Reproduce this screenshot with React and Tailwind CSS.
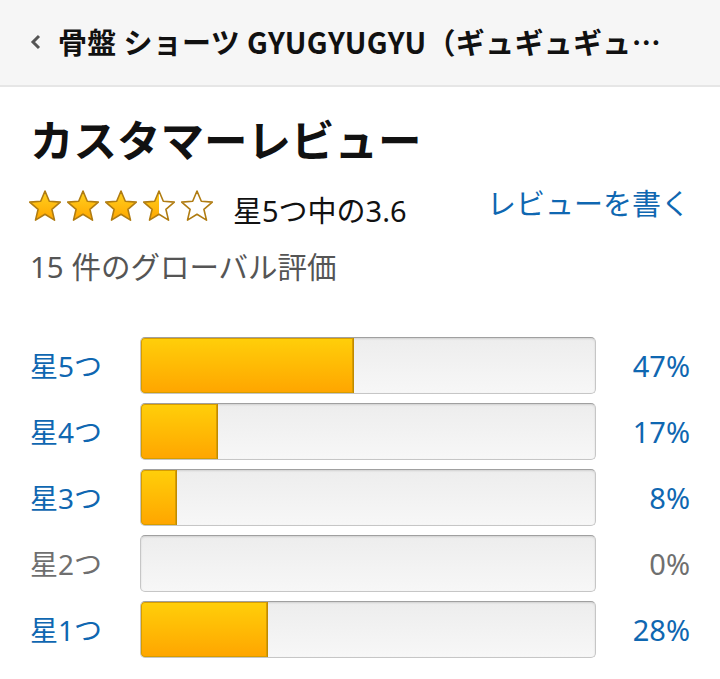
import React from 'react';

const blue = 'text-[#0f67b1]';

const Star = ({ fill = 1, id }) => (
    <svg width="36" height="34" viewBox="0 0 36 34">
        <defs>
            <linearGradient id={`g${id}`} x1="0" y1="0" x2="0" y2="1">
                <stop offset="0" stopColor="#ffd21f" />
                <stop offset="1" stopColor="#ffa600" />
            </linearGradient>
            <clipPath id={`c${id}`}>
                <rect x="0" y="0" width={36 * fill} height="34" />
            </clipPath>
        </defs>
        <path
            d="M18 2 L22.3 12.2 L33.3 13.1 L24.9 20.3 L27.5 31.1 L18 25.3 L8.5 31.1 L11.1 20.3 L2.7 13.1 L13.7 12.2 Z"
            fill="#fff"
        />
        <path
            d="M18 2 L22.3 12.2 L33.3 13.1 L24.9 20.3 L27.5 31.1 L18 25.3 L8.5 31.1 L11.1 20.3 L2.7 13.1 L13.7 12.2 Z"
            fill={`url(#g${id})`}
            clipPath={`url(#c${id})`}
        />
        <path
            d="M18 2 L22.3 12.2 L33.3 13.1 L24.9 20.3 L27.5 31.1 L18 25.3 L8.5 31.1 L11.1 20.3 L2.7 13.1 L13.7 12.2 Z"
            fill="none"
            stroke="#b07c12"
            strokeWidth="1.6"
            strokeLinejoin="round"
        />
    </svg>
);

const rows = [
    { label: '星5つ', pct: 47 },
    { label: '星4つ', pct: 17 },
    { label: '星3つ', pct: 8 },
    { label: '星2つ', pct: 0 },
    { label: '星1つ', pct: 28 },
];

const App = () => {
    return (
        <div className="w-[720px] h-[679px] bg-white overflow-hidden font-['Noto_Sans','Noto_Sans_CJK_JP',sans-serif]">
            {/* Header */}
            <div className="h-[87px] bg-[#f6f6f6] border-b-2 border-[#e6e6e6] flex items-center pl-[29px]">
                <svg width="14" height="18" viewBox="0 0 14 18" className="mr-[15px] -mt-[2px]">
                    <path d="M10 3 L4 9 L10 15" fill="none" stroke="#555" strokeWidth="3" />
                </svg>
                <div className="text-[29px] leading-[40px] -mt-[4px] font-bold text-[#111] whitespace-nowrap tracking-[0.3px] font-['Noto_Sans_CJK_JP',sans-serif]">
                    骨盤 ショーツ GYUGYUGYU（ギュギュギュ…
                </div>
            </div>

            <div className="px-[30px]">
                {/* Title */}
                <h1 className="mt-[22px] text-[43.5px] leading-[60px] font-bold text-[#111] font-['Noto_Sans_CJK_JP',sans-serif]">
                    カスタマーレビュー
                </h1>

                {/* Average */}
                <div className="mt-[12px] flex items-center justify-between">
                    <div className="flex items-center">
                        <div className="flex -ml-[3px] gap-[2px]">
                            <Star id="a" fill={1} />
                            <Star id="b" fill={1} />
                            <Star id="c" fill={1} />
                            <Star id="d" fill={0.5} />
                            <Star id="e" fill={0} />
                        </div>
                        <span className="ml-[18px] mt-[10px] text-[29px] leading-[40px] text-[#111]">星5つ中の3.6</span>
                    </div>
                    <a className={`text-[29px] leading-[40px] ${blue} -mt-[4px]`}>レビューを書く</a>
                </div>

                <div className="mt-[16px] text-[29.5px] leading-[40px] text-[#555]">15 件のグローバル評価</div>

                {/* Histogram */}
                <div className="mt-[50px] flex flex-col gap-[9px]">
                    {rows.map((r) => {
                        const active = r.pct > 0;
                        const color = active ? blue : 'text-[#6f6f6f]';
                        return (
                            <div key={r.label} className="flex items-center h-[57px]">
                                <div className={`w-[110px] text-[28px] ${color}`}>{r.label}</div>
                                <div className="relative w-[456px] h-[57px] rounded-[5px] border border-[#c6c6c6] border-t-[#a0a0a0] bg-gradient-to-b from-[#ededed] to-[#f7f7f7] shadow-[inset_0_1px_2px_rgba(0,0,0,0.12)] overflow-hidden">
                                    {active && (
                                        <div
                                            className="h-full rounded-l-[4px] border-r border-[#c18a00] bg-gradient-to-b from-[#ffcf0a] to-[#ffa500] shadow-[inset_0_0_0_1px_#d79d00]"
                                            style={{ width: `${r.pct}%` }}
                                        />
                                    )}
                                </div>
                                <div className={`flex-1 text-right text-[29px] ${color}`}>{r.pct}%</div>
                            </div>
                        );
                    })}
                </div>
            </div>
        </div>
    );
};

export default App;
